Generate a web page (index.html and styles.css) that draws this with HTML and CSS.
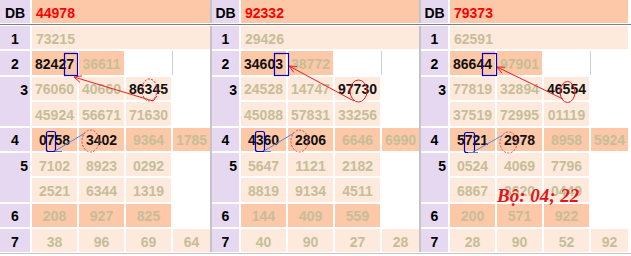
FILE: index.html
```html
<!DOCTYPE html>
<html>
<head>
    <meta charset="utf-8">
    <title>Soi cau</title>
    <link rel="stylesheet" href="styles.css">
</head>
<body>
    <div class="board">
        <div class="heads">
            <div class="head first"><div class="lbl">DB</div><div class="db">44978</div></div>
            <div class="head"><div class="lbl">DB</div><div class="db">92332</div></div>
            <div class="head"><div class="lbl">DB</div><div class="db">79373</div></div>
        </div>

        <div class="bodies">
            <div class="panel first">
                <div class="lbl">1</div><div class="cell lt wide">73215</div>
                <div class="lbl">2</div><div class="cell dk hit">82427</div><div class="cell dk">36611</div><div class="cell"></div><div class="cell edge"></div>
                <div class="lbl tall">3</div><div class="cell lt">76060</div><div class="cell lt">40660</div><div class="cell lt hit">86345</div><div class="cell"></div>
                <div class="cell lt">45924</div><div class="cell lt">56671</div><div class="cell lt">71630</div><div class="cell"></div>
                <div class="lbl">4</div><div class="cell dk hit">0758</div><div class="cell dk hit">3402</div><div class="cell dk">9364</div><div class="cell dk">1785</div>
                <div class="lbl tall">5</div><div class="cell lt">7102</div><div class="cell lt">8923</div><div class="cell lt">0292</div><div class="cell"></div>
                <div class="cell lt">2521</div><div class="cell lt">6344</div><div class="cell lt">1319</div><div class="cell"></div>
                <div class="lbl">6</div><div class="cell dk">208</div><div class="cell dk">927</div><div class="cell dk">825</div><div class="cell"></div>
                <div class="lbl">7</div><div class="cell lt">38</div><div class="cell lt">96</div><div class="cell lt">69</div><div class="cell lt">64</div>
            </div>

            <div class="panel">
                <div class="lbl">1</div><div class="cell lt wide">29426</div>
                <div class="lbl">2</div><div class="cell dk hit">34603</div><div class="cell dk">38772</div><div class="cell"></div><div class="cell edge"></div>
                <div class="lbl tall">3</div><div class="cell lt">24528</div><div class="cell lt">14747</div><div class="cell lt hit">97730</div><div class="cell"></div>
                <div class="cell lt">45088</div><div class="cell lt">57831</div><div class="cell lt">33256</div><div class="cell"></div>
                <div class="lbl">4</div><div class="cell dk hit">4360</div><div class="cell dk hit">2806</div><div class="cell dk">6646</div><div class="cell dk">6990</div>
                <div class="lbl tall">5</div><div class="cell lt">5647</div><div class="cell lt">1121</div><div class="cell lt">2182</div><div class="cell"></div>
                <div class="cell lt">8819</div><div class="cell lt">9134</div><div class="cell lt">4511</div><div class="cell"></div>
                <div class="lbl">6</div><div class="cell dk">144</div><div class="cell dk">409</div><div class="cell dk">559</div><div class="cell"></div>
                <div class="lbl">7</div><div class="cell lt">40</div><div class="cell lt">90</div><div class="cell lt">27</div><div class="cell lt">28</div>
            </div>

            <div class="panel">
                <div class="lbl">1</div><div class="cell lt wide">62591</div>
                <div class="lbl">2</div><div class="cell dk hit">86644</div><div class="cell dk">97901</div><div class="cell"></div><div class="cell edge"></div>
                <div class="lbl tall">3</div><div class="cell lt">77819</div><div class="cell lt">32894</div><div class="cell lt hit">46554</div><div class="cell"></div>
                <div class="cell lt">37519</div><div class="cell lt">72995</div><div class="cell lt">01119</div><div class="cell"></div>
                <div class="lbl">4</div><div class="cell dk hit">5721</div><div class="cell dk hit">2978</div><div class="cell dk">8958</div><div class="cell dk">5924</div>
                <div class="lbl tall">5</div><div class="cell lt">0524</div><div class="cell lt">4069</div><div class="cell lt">7796</div><div class="cell"></div>
                <div class="cell lt">6867</div><div class="cell lt">3620</div><div class="cell lt">0449</div><div class="cell"></div>
                <div class="lbl">6</div><div class="cell dk">200</div><div class="cell dk">571</div><div class="cell dk">922</div><div class="cell"></div>
                <div class="lbl">7</div><div class="cell lt">28</div><div class="cell lt">90</div><div class="cell lt">52</div><div class="cell lt">92</div>
            </div>
        </div>
        <div class="foot"></div>

        <!-- markers drawn over the tables -->
        <svg class="marks" width="631" height="256" viewBox="0 0 631 256">
            <g fill="none" stroke="#0000cc" stroke-width="1.2">
                <rect x="64.5" y="53.5" width="13" height="22"/>
                <rect x="274.5" y="53.5" width="14" height="22"/>
                <rect x="482.5" y="53.5" width="14" height="22"/>
                <rect x="46.5" y="131.5" width="9" height="20" rx="2"/>
                <rect x="255.5" y="131.5" width="9" height="20" rx="2"/>
                <rect x="464.5" y="132.5" width="10" height="20" rx="2"/>
            </g>
            <g fill="none" stroke="#ee1c1c" stroke-width="1">
                <ellipse cx="149.5" cy="90" rx="7.5" ry="11" stroke-dasharray="2 1.5"/>
                <ellipse cx="358.5" cy="91" rx="8.5" ry="11"/>
                <ellipse cx="567.5" cy="92" rx="7.5" ry="10.5"/>
                <path d="M153 101 L74 77 M74 77 l5.95 5.35 M74 77 l7.92 -1.13 M153 101 l4 -5"/>
                <path d="M354 101 L289 66 M289 66 l4.78 6.42 M289 66 l7.99 0.46"/>
                <path d="M563 99 L497 67 M497 67 l5.05 6.21 M497 67 l8 0.13"/>
            </g>
            <g fill="none" stroke="#e04848" stroke-width="1" stroke-dasharray="2 1.5">
                <ellipse cx="90.5" cy="141" rx="8.5" ry="11"/>
                <ellipse cx="299.5" cy="141" rx="8.5" ry="11"/>
                <ellipse cx="508.5" cy="142.5" rx="8.5" ry="10.5"/>
            </g>
            <g fill="none" stroke="#5b83d6" stroke-width="1">
                <path d="M55 151 L85 133 M55 151.5 h7"/>
                <path d="M264 151 L294 133 M264 151.5 h7"/>
                <path d="M473 152 L503 135 M468 152.5 h10"/>
            </g>
        </svg>
        <div class="note">Bộ: 04; 22</div>
    </div>
</body>
</html>
```

FILE: styles.css
```css
* { box-sizing: border-box; }

body {
    margin: 0;
    background: #fff;
    font-family: "Liberation Sans", Arial, sans-serif;
    font-size: 14px;
    font-weight: bold;
}

.board {
    position: relative;
    width: 631px;
    height: 256px;
    overflow: hidden;
}

.heads {
    display: flex;
    border-bottom: 1px solid #808080;
    padding-bottom: 1px;
    margin-bottom: 1px;
}
.bodies { display: flex; }

.head, .panel {
    display: grid;
    grid-template-columns: 27px 45px 45px 45px 37px;
    column-gap: 2px;
    border-left: 2px solid #c4c4c4;
}
.head.first, .panel.first {
    grid-template-columns: 30px 45px 45px 45px 37px;
    border-left: none;
}
.head { grid-template-rows: 23px; }
.panel {
    grid-template-rows: repeat(9, 23.375px);
    row-gap: 2px;
}

.lbl {
    background: #e6d8f0;
    color: #000;
    display: flex;
    align-items: center;
    justify-content: center;
    padding-top: 2px;
}
.lbl.tall {
    grid-row: span 2;
    align-items: flex-start;
    justify-content: flex-end;
    padding-right: 2px;
    line-height: 23px;
}

.db {
    grid-column: span 4;
    background: #fdc8a8;
    color: #ff0000;
    display: flex;
    align-items: center;
    padding: 2px 0 0 4px;
}

.cell {
    display: flex;
    align-items: center;
    justify-content: center;
    padding-top: 2px;
    color: #c6be98;
    white-space: nowrap;
}
.cell.lt { background: #fdeadc; }
.cell.dk { background: #fdc8a8; }
.cell.hit { color: #111; }
.cell.wide {
    grid-column: span 4;
    justify-content: flex-start;
    padding-left: 4px;
}
.cell.edge { border-left: 1px solid #c9cfe2; margin-left: -1px; }

.foot {
    height: 2px;
    margin-top: 1px;
    border-top: 1px solid #c4c4c4;
}

.marks {
    position: absolute;
    left: 0;
    top: 0;
    pointer-events: none;
}

.note {
    position: absolute;
    left: 497px;
    top: 186px;
    font: italic bold 19px/19px "Liberation Serif", "Times New Roman", serif;
    color: #e3141b;
    white-space: nowrap;
}
```
